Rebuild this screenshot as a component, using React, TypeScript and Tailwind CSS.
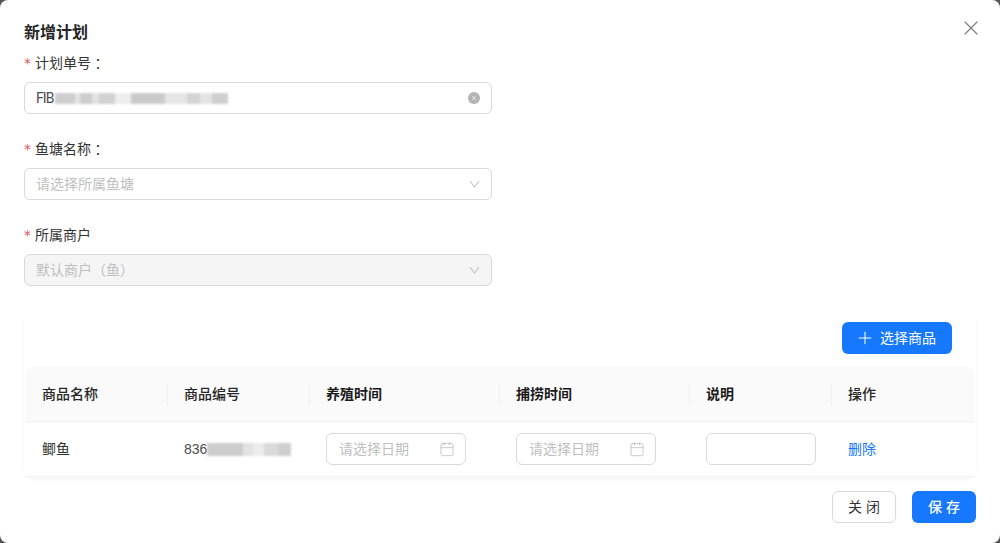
import { Plus, X, Calendar } from "lucide-react";

const blurFib = ["w-[20px] bg-[#cfcfcf]", "w-[5px] bg-[#e4e4e4]", "w-[12px] bg-[#cdcdcd]", "w-[7px] bg-[#e2e2e2]", "w-[16px] bg-[#d2d2d2]", "w-[16px] bg-[#eeeeee]", "w-[34px] bg-[#cbcbcb]", "w-[22px] bg-[#e6e6e6]", "w-[13px] bg-[#d4d4d4]", "w-[12px] bg-[#e4e4e4]", "w-[16px] bg-[#cfcfcf]"];
const blurCode = ["w-[36px] bg-[#cdcdcd]", "w-[10px] bg-[#e2e2e2]", "w-[11px] bg-[#ececec]", "w-[14px] bg-[#dadada]", "w-[13px] bg-[#cfcfcf]"];

function Label({ text, colon }: { text: string; colon?: boolean }) {
  return (
    <div className="flex h-[22px] items-center text-[14px] leading-[22px] text-[#333333]">
      <span className="mr-[3px] w-[8px] font-['DejaVu_Sans'] text-[14px] text-[#e0535a]">*</span>
      {text}
      {colon && <span className="font-['Noto_Sans_CJK_TC']">：</span>}
    </div>
  );
}

function Chevron() {
  return (
    <svg width="11" height="8" viewBox="0 0 11 8" fill="none" stroke="#c4c4c4" strokeWidth="1.1">
      <path d="M1 1 L5.5 7 L10 1" />
    </svg>
  );
}

function DatePicker() {
  return (
    <div className="flex h-[32px] w-[140px] items-center justify-between rounded-[6px] border border-[#d9d9d9] bg-white pl-[12px] pr-[10px]">
      <span className="text-[14px] text-[#bfbfbf]">请选择日期</span>
      <Calendar size={16} strokeWidth={1.25} className="text-[#bfbfbf]" />
    </div>
  );
}

export default function App() {
  return (
    <div className="h-[543px] w-[1000px] overflow-hidden bg-[#555555] font-['Liberation_Sans','Noto_Sans_CJK_SC',sans-serif]">
      <div className="relative flex h-[543px] w-[1000px] flex-col rounded-[8px] bg-white px-[24px] pt-[21px]">
        <X size={24} strokeWidth={1.25} className="absolute right-[17px] top-[16px] text-[#808080]" />
        <h1 className="h-[24px] text-[16px] font-semibold leading-[24px] text-[#262626]">新增计划</h1>

        <div className="mt-[7px]">
          <Label text="计划单号" colon />
          <div className="mt-[8px] flex h-[32px] w-[468px] items-center justify-between rounded-[6px] border border-[#d9d9d9] pl-[11px] pr-[11px]">
            <div className="flex items-center">
              <span className="font-['Roboto'] text-[14px] tracking-[-0.9px] text-[#4d4d4d]">FIB</span>
              <div className="ml-[1px] flex h-[11px] blur-[1px]">
                {blurFib.map((c, i) => (
                  <div key={i} className={c} />
                ))}
              </div>
            </div>
            <div className="flex h-[12px] w-[12px] items-center justify-center rounded-full bg-[#b3b3b3]">
              <X size={8} strokeWidth={2} className="text-white" />
            </div>
          </div>
        </div>

        <div className="mt-[24px]">
          <Label text="鱼塘名称" colon />
          <div className="mt-[8px] flex h-[32px] w-[468px] items-center justify-between rounded-[6px] border border-[#d9d9d9] pl-[11px] pr-[11px]">
            <span className="text-[14px] text-[#bfbfbf]">请选择所属鱼塘</span>
            <Chevron />
          </div>
        </div>

        <div className="mt-[24px]">
          <Label text="所属商户" />
          <div className="mt-[8px] flex h-[32px] w-[468px] items-center justify-between rounded-[6px] border border-[#d9d9d9] bg-[#f5f5f5] pl-[11px] pr-[11px]">
            <span className="-mt-[2px] flex font-['Noto_Sans_CJK_TC'] text-[14px] text-[#bfbfbf]">
              默认商户
              <span className="w-[14px] text-center">（</span>
              鱼
              <span className="w-[14px] text-center">）</span>
            </span>
            <Chevron />
          </div>
        </div>

        {/* goods table card */}
        <div className="mt-[24px] h-[168px] rounded-[8px] px-[2px] pt-[12px] shadow-[0_1px_3px_rgba(0,0,0,0.06)]">
          <div className="flex justify-end pr-[22px]">
            <button className="flex h-[32px] w-[110px] items-center gap-[5px] rounded-[6px] bg-[#1677ff] pl-[13px] text-[14px] text-white">
              <Plus size={20} strokeWidth={1.25} />
              选择商品
            </button>
          </div>

          <div className="mt-[13px] grid grid-cols-[142px_142px_190px_190px_142px_142px]">
            {["商品名称", "商品编号", "养殖时间", "捕捞时间", "说明", "操作"].map((t, i) => (
              <div
                key={t}
                className={`relative flex h-[55px] items-center border-b border-[#f0f0f0] bg-[#fafafa] px-[16px] text-[14px] ${i >= 2 && i <= 4 ? "font-semibold text-[#1a1a1a]" : "font-medium text-[#262626]"} ${i === 0 ? "rounded-tl-[8px]" : ""} ${i === 5 ? "rounded-tr-[8px]" : ""}`}
              >
                {t}
                {i < 5 && <div className="absolute right-0 top-[17px] h-[22px] w-px bg-[#f0f0f0]" />}
              </div>
            ))}

            <div className="flex h-[55px] items-center border-b border-[#f0f0f0] px-[16px] text-[14px] text-[#333333]">鲫鱼</div>
            <div className="flex h-[55px] items-center border-b border-[#f0f0f0] px-[16px] text-[14px] text-[#4d4d4d]">
              836
              <div className="flex h-[13px] blur-[1px]">
                {blurCode.map((c, i) => (
                  <div key={i} className={c} />
                ))}
              </div>
            </div>
            <div className="flex h-[55px] items-center border-b border-[#f0f0f0] px-[16px]">
              <DatePicker />
            </div>
            <div className="flex h-[55px] items-center border-b border-[#f0f0f0] px-[16px]">
              <DatePicker />
            </div>
            <div className="flex h-[55px] items-center border-b border-[#f0f0f0] px-[16px]">
              <div className="h-[32px] w-[110px] rounded-[6px] border border-[#d9d9d9]" />
            </div>
            <div className="flex h-[55px] items-center border-b border-[#f0f0f0] px-[16px] text-[14px] text-[#1677ff]">删除</div>
          </div>
        </div>

        <div className="mt-[13px] flex justify-end gap-[16px]">
          <button className="h-[32px] w-[64px] rounded-[6px] border border-[#d9d9d9] bg-white text-[14px] text-[#333333]">关 闭</button>
          <button className="h-[32px] w-[64px] rounded-[6px] bg-[#1677ff] text-[14px] font-medium text-white">保 存</button>
        </div>
      </div>
    </div>
  );
}
